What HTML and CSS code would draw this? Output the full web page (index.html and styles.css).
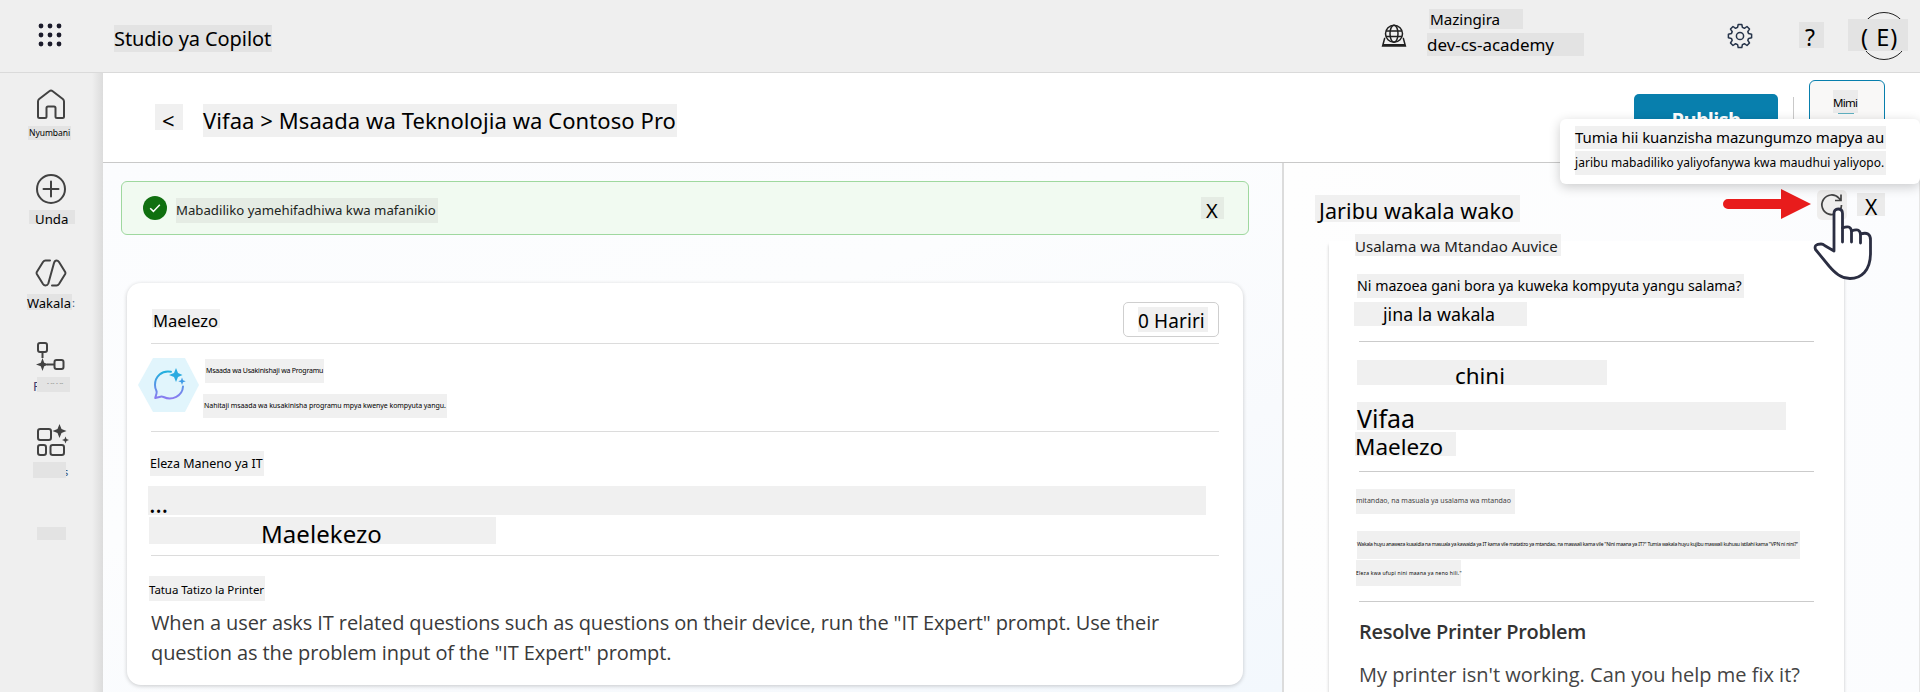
FILE: index.html
```html
<!DOCTYPE html>
<html lang="sw">
<head>
<meta charset="utf-8">
<title>Studio ya Copilot</title>
<link rel="stylesheet" href="styles.css">
</head>
<body>
<header class="topbar">
  <svg class="waffle" width="26" height="26" viewBox="0 0 26 26" fill="#1b1b2b"><circle cx="4" cy="4" r="2.4"/><circle cx="13" cy="4" r="2.4"/><circle cx="22" cy="4" r="2.4"/><circle cx="4" cy="13" r="2.4"/><circle cx="13" cy="13" r="2.4"/><circle cx="22" cy="13" r="2.4"/><circle cx="4" cy="22" r="2.4"/><circle cx="13" cy="22" r="2.4"/><circle cx="22" cy="22" r="2.4"/></svg>
  <div class="hl dark brand"><span>Studio ya Copilot</span></div>
  <svg class="globe" width="26" height="24" viewBox="0 0 26 24" fill="none" stroke="#1f1f1f" stroke-width="1.5"><circle cx="13" cy="9.7" r="8.5"/><ellipse cx="13" cy="9.7" rx="4" ry="8.5"/><path d="M5 7h16M5 12.5h16M4.3 14.5H3.6L1.6 22h22.8l-2-7.5h-.7M2 20.8h22"/></svg>
  <div class="env">
    <div class="hl dark env-label"><span>Mazingira</span></div>
    <div class="hl dark env-name"><span>dev-cs-academy</span></div>
  </div>
  <svg class="gear" width="26" height="26" viewBox="0 0 26 26" fill="none" stroke="#26344a" stroke-width="1.5" stroke-linejoin="round"><circle cx="13" cy="13" r="3.6"/><path d="M11.2 1.4h3.6l.6 3 2 .9 2.6-1.8 2.5 2.5-1.7 2.6.8 2 3 .6v3.6l-3 .6-.8 2 1.7 2.6-2.5 2.5-2.6-1.8-2 .9-.6 3h-3.6l-.6-3-2-.9L6 22.500 3.500 20l1.700-2.600-.8-2-3-.6v-3.600l3-.6.8-2L3.500 6 6 3.500l2.600 1.800 2-.9z"/></svg>
  <div class="hl dark help"><span>?</span></div>
  <div class="avatar"><div class="hl dark initials"><span>( E)</span></div></div>
</header>
<div class="body">
  <nav class="rail">
    <svg class="i-home" width="30" height="31" viewBox="0 0 30 31" fill="none" stroke="#424242" stroke-width="2" stroke-linejoin="round"><path d="M2 12.500Q2 11 3.200 10L13.300 2.200Q15 1 16.700 2.200L26.800 10Q28 11 28 12.500V27.500Q28 29 26.500 29H21Q19.500 29 19.500 27.500V19Q19.500 17.500 18 17.500H12Q10.500 17.500 10.500 19V27.500Q10.500 29 9 29H3.500Q2 29 2 27.500Z"/></svg>
    <div class="hl dark n-home"><span>Nyumbani</span></div>
    <svg class="i-add" width="32" height="32" viewBox="0 0 32 32" fill="none" stroke="#424242" stroke-width="2"><circle cx="16" cy="16" r="14"/><path d="M16 8.500v15M8.500 16h15" stroke-linecap="round"/></svg>
    <div class="hl dark n-add"><span>Unda</span></div>
    <svg class="i-agent" width="32" height="30" viewBox="0 0 32 30" fill="none" stroke="#424242" stroke-width="2" stroke-linecap="round" stroke-linejoin="round"><path d="M15 2.500H10.500Q9 2.500 8 4L1.800 14Q1.300 15 1.800 16L8 26Q9 27.500 10.500 27.500Q12.500 27.500 13.300 25.500L19 5Q19.800 2.500 21.500 2.500Q23 2.500 24 4L30.200 14Q30.700 15 30.200 16L24 26Q23 27.500 21.500 27.500H17"/></svg>
    <div class="nav-row n-agent-row"><div class="hl dark n-agent"><span>Wakala</span></div><span class="rest">:</span></div>
    <svg class="i-flow" width="30" height="30" viewBox="0 0 30 30" fill="none" stroke="#424242" stroke-width="2"><rect x="2" y="2" width="9" height="9" rx="2"/><rect x="18.500" y="19" width="9" height="9" rx="2"/><path d="M6.500 11v6M11 23.500h7.500"/><path stroke="none" fill="#424242" d="M6.500 17l1.700 4.800 4.800 1.700-4.800 1.700L6.500 30l-1.700-4.800L0 23.500l4.800-1.700z"/></svg>
    <div class="nav-row n-flow-row"><span class="cut">F</span><div class="hl dark n-flow"><span>- -- - --</span></div></div>
    <svg class="i-tools" width="34" height="34" viewBox="0 0 34 34" fill="none" stroke="#424242" stroke-width="2"><rect x="2" y="6" width="13" height="11" rx="2.200"/><rect x="2" y="22" width="8" height="10" rx="2.200"/><rect x="14.500" y="22" width="13.500" height="10" rx="2.200"/><g stroke="none" fill="#424242"><path d="M23.500 1l2 5 5 2-5 2-2 5-2-5-5-2 5-2zM29.500 13.500l1 2.500 2.500 1-2.500 1-1 2.500-1-2.500-2.500-1 2.500-1z"/></g></svg>
    <div class="nav-row n-tools-row"><div class="hl dark n-tools"></div><span class="rest">s</span></div>
    <div class="hl dark n-more"></div>
  </nav>
  <main class="main">
    <div class="crumbs">
      <div class="hl back"><span>&lt;</span></div>
      <div class="hl trail"><span>Vifaa &gt; Msaada wa Teknolojia wa Contoso Pro</span></div>
      <button class="publish">Publish</button>
      <div class="sep"></div>
      <div class="more"><div class="hl mimi"><span>Mimi</span></div><i></i></div>
    </div>
    <div class="columns">
      <section class="left">
        <div class="notice">
          <svg width="24" height="24" viewBox="0 0 24 24"><circle cx="12" cy="12" r="12" fill="#107010"/><path d="M7.200 12.200l3.200 3.200L16.800 8.800" fill="none" stroke="#fff" stroke-width="1.500"/></svg>
          <div class="hl green saved"><span>Mabadiliko yamehifadhiwa kwa mafanikio</span></div>
          <div class="hl green dismiss"><span>X</span></div>
        </div>
        <article class="card">
          <div class="card-head">
            <div class="hl heading"><span>Maelezo</span></div>
            <div class="edit"><div class="hl edit-label"><span>0 Hariri</span></div></div>
          </div>
          <div class="topic">
            <svg width="62" height="54" viewBox="0 0 62 54"><defs><linearGradient id="chat" x1="0" y1="0" x2="0" y2="1"><stop offset="0" stop-color="#22b0dd"/><stop offset="1" stop-color="#8b7cf0"/></linearGradient></defs><path fill="#e1f5fc" d="M15 0h32l14 27-14 27H15L0 27z"/><path d="M33 13.800C24 12 17 18.500 17 27Q17 30 18.300 32.500Q19 34 18.500 35.500L17.200 40L22.500 38.700Q24 38.300 25.500 39C34 43 44.500 38 45 28.500" fill="none" stroke="url(#chat)" stroke-width="2" stroke-linecap="round" stroke-linejoin="round"/><path fill="#2aabe0" d="M38 10l2 5 4.500 2-4.500 2-2 5-2-5-5-2 5-2z"/><path fill="#3d9be6" d="M44 19.500l1 2.700 2.700 1-2.700 1-1 2.800-1-2.800-2.700-1 2.700-1z"/></svg>
            <div>
              <div class="hl tiny t-one"><span>Msaada wa Usakinishaji wa Programu</span></div>
              <div class="hl tiny t-two"><span>Nahitaji msaada wa kusakinisha programu mpya kwenye kompyuta yangu.</span></div>
            </div>
          </div>
          <div class="expert">
            <div class="hl e-title"><span>Eleza Maneno ya IT</span></div>
            <div class="hl e-dots"><span>...</span></div>
            <div class="hl e-guide"><span>Maelekezo</span></div>
          </div>
          <div class="hl p-title"><span>Tatua Tatizo la Printer</span></div>
          <p class="para">When a user asks IT related questions such as questions on their device, run the "IT Expert" prompt. Use their<br>question as the problem input of the "IT Expert" prompt.</p>
        </article>
      </section>
      <aside class="test">
        <div class="test-head">
          <div class="hl t-title"><span>Jaribu wakala wako</span></div>
          <svg class="arrow" width="88" height="30" viewBox="0 0 88 30" fill="#e81c1c"><path d="M5 10H58V0L88 15 58 30V20H5A5 5 0 0 1 5 10z"/></svg>
          <div class="refresh"><svg width="30" height="30" viewBox="0 0 30 30" fill="none" stroke="#424242" stroke-width="1.700"><path d="M24.500 15A9.800 9.800 0 1 1 22 8.200L24 10.500M24 4.500v6h-6"/></svg></div>
          <div class="hl dark2 t-close"><span>X</span></div>
        </div>
        <div class="chat">
          <div class="hl c1"><span>Usalama wa Mtandao Auvice</span></div>
          <div class="hl c2"><span>Ni mazoea gani bora ya kuweka kompyuta yangu salama?</span></div>
          <div class="hl c3"><span>jina la wakala</span></div>
          <hr class="r1">
          <div class="hl c4"><span>chini</span></div>
          <div class="hl c5"><span>Vifaa</span></div>
          <div class="hl c6"><span>Maelezo</span></div>
          <hr class="r2">
          <div class="hl tiny c7"><span>mitandao, na masuala ya usalama wa mtandao</span></div>
          <div class="hl c8"><span>Wakala huyu anaweza kusaidia na masuala ya kawaida ya IT kama vile matatizo ya mtandao, na maswali kama vile "Nini maana ya IT?" Tumia wakala huyu kujibu maswali kuhusu istilahi kama "VPN ni nini?"</span></div>
          <div class="hl c9"><span>Eleza kwa ufupi nini maana ya neno hili."</span></div>
          <hr class="r3">
          <h3 class="c10">Resolve Printer Problem</h3>
          <p class="c11">My printer isn't working. Can you help me fix it?</p>
        </div>
      </aside>
    </div>
  </main>
</div>
<div class="tooltip">
  <div class="hl tip1"><span>Tumia hii kuanzisha mazungumzo mapya au</span></div>
  <div class="hl tip2"><span>jaribu mabadiliko yaliyofanywa kwa maudhui yaliyopo.</span></div>
</div>
<svg class="hand" width="60" height="74" viewBox="0 0 60 74" fill="#fff" stroke="#2b2e42" stroke-width="2.8" stroke-linejoin="round" stroke-linecap="round"><path d="M21 44V6.500Q21 2 25.200 2T29.500 6.500V21Q37.500 17.500 38.500 24Q46.500 20.500 47.500 27Q57.500 24 57.500 33V46C57.500 64 48 71.500 37 71.500C28 71.500 22 66 16 59L2.500 42.500Q.5 37 8 37Q10 37 12 38.800L21 44Z"/><path fill="none" d="M29.500 21v14M38.500 24v11M47.500 27v9"/></svg>
</body>
</html>
```
FILE: styles.css
```css
* { box-sizing: border-box; }
body { margin: 0; width: 1920px; height: 692px; overflow: hidden; background: #efefef; color: #000; font-family: "Noto Sans", "Open Sans", sans-serif; }
svg { display: block; flex: none; }
p, h3 { margin: 0; }
hr { margin: 0; border: 0; height: 1px; background: #cbcbcb; }
.hl { flex: none; background: #f0f0f0; white-space: pre; }
.hl span { display: block; width: max-content; }
.dark { background: #e3e3e3; }
.dark2 { background: #ebebeb; }
.green { background: #e5ece4; }

/* Top bar */
.topbar { height: 73px; display: flex; align-items: flex-start; background: #efefef; border-bottom: 1px solid #dadada; }
.waffle { margin: 22px 0 0 37px; }
.brand { margin: 25px 0 0 51px; width: 158px; height: 27px; font-size: 20px; line-height: 28.5px; letter-spacing: -.09px; }
.globe { margin: 24px 0 0 1109px; }
.env { margin: 9px 0 0 20px; width: 157px; }
.env-label { margin-left: 2px; width: 94px; height: 20px; padding-left: 1px; font-size: 15.2px; line-height: 21.5px; letter-spacing: -.05px; }
.env-name { margin-top: 4px; width: 157px; height: 23px; font-size: 17px; line-height: 23px; letter-spacing: -.03px; }
.gear { margin: 23px 0 0 143px; }
.help { margin: 22px 0 0 46px; width: 25px; height: 26px; padding-left: 6px; font-size: 23px; line-height: 31px; }
.avatar { margin: 12px 0 0 36px; width: 48px; height: 48px; border: 1px solid #222; border-radius: 50%; }
.initials { margin: 6px 0 0 -13px; width: 60px; height: 32px; padding-left: 13px; font-size: 23.5px; line-height: 36px; letter-spacing: 1px; }

/* Navigation rail */
.body { display: flex; height: 619px; }
.rail { width: 103px; flex: none; display: flex; flex-direction: column; align-items: flex-start; background: linear-gradient(90deg, #efefef 92px, #dcdcdc 103px); }
.i-home { margin: 16px 0 0 36px; }
.n-home { margin: 6px 0 0 28px; width: 43px; height: 14px; padding-left: 1px; font-size: 8.5px; line-height: 13.4px; letter-spacing: -.05px; }
.i-add { margin: 33px 0 0 35px; }
.n-add { margin: 5px 0 0 29px; width: 46px; height: 14px; padding-left: 6px; font-size: 13.2px; line-height: 18.5px; }
.i-agent { margin: 34px 0 0 35px; }
.nav-row { display: flex; }
.n-agent-row { margin: 6px 0 0 27px; }
.n-agent { width: 45px; height: 16px; font-size: 13px; line-height: 18px; }
.rest { font-size: 11px; line-height: 18px; color: #3b5a80; height: 16px; }
.i-flow { margin: 31px 0 0 36px; }
.n-flow-row { margin: 6px 0 0 33px; }
.cut { width: 4px; height: 16px; font-size: 13px; line-height: 19px; color: #40406e; }
.n-flow { width: 33px; height: 15px; padding-left: 10px; font-size: 6px; line-height: 12px; color: #666; position: relative; }
.i-tools { margin: 30px 0 0 36px; }
.n-tools-row { margin: 5px 0 0 33px; }
.n-tools { width: 33px; height: 16px; position: relative; }
.n-tools-row .rest { margin-left: -3px; line-height: 20px; }
.n-more { margin: 49px 0 0 37px; width: 29px; height: 13px; }

/* Page header */
.main { width: 1817px; background: #fff; }
.crumbs { height: 90px; display: flex; align-items: flex-start; border-bottom: 1px solid #c9c9c9; background: #fff; }
.back { margin: 31px 0 0 52px; width: 28px; height: 26px; padding-left: 7px; font-size: 22px; line-height: 32px; }
.trail { margin: 31px 0 0 20px; width: 474px; height: 33px; font-size: 22px; line-height: 32px; letter-spacing: .077px; }
.publish { margin: 21px 0 0 957px; width: 144px; height: 46px; padding: 0; border: 0; border-radius: 5px; background: #087fad; color: #fff; font: 700 20px/46px "Open Sans", "Noto Sans", sans-serif; letter-spacing: -.7px; padding-top: 3px; }
.sep { margin: 24px 0 0 15px; width: 1px; height: 40px; background: #c9c9c9; }
.more { margin: 7px 0 0 15px; width: 76px; height: 60px; padding: 9px 0 0 23px; border: 1.5px solid #087fad; border-radius: 6px; background: #f9f8f7; }
.mimi { width: 25px; height: 23px; background: #ebebeb; font-size: 11.5px; line-height: 25px; letter-spacing: -.7px; }
.more i { display: block; margin-left: 5px; width: 16px; height: 1px; background: #5fb0c0; }

/* Agent details */
.columns { display: flex; height: 529px; }
.left { width: 1179px; padding: 18px 0 0 18px; background: linear-gradient(160deg, #fbfcfe 0%, #fcfdfe 40%, #f8fafd 70%, #f3f8fd 100%); }
.notice { width: 1128px; height: 54px; display: flex; align-items: flex-start; border: 1px solid #9fd89f; border-radius: 6px; background: #f1faf1; }
.notice svg { margin: 14px 0 0 21px; }
.saved { margin: 16px 0 0 9px; width: 262px; height: 25px; font-size: 13.2px; line-height: 25px; color: #1c241c; }
.dismiss { margin: 15px 0 0 763px; width: 23px; height: 22px; padding-left: 5px; font-size: 20px; line-height: 27.500px; }
.card { margin: 48px 0 0 6px; width: 1116px; height: 402px; padding: 0 24px; border-radius: 14px; background: #fff; box-shadow: 0 1px 4px rgba(0, 0, 0, .2); }
.card-head { height: 61px; display: flex; align-items: flex-start; border-bottom: 1px solid #dcdcdc; }
.heading { margin: 26px 0 0 1px; width: 68px; height: 19px; padding-left: 1px; font-size: 16.6px; line-height: 23.5px; }
.edit { margin: 19px 0 0 903px; width: 96px; height: 35px; padding: 4px 0 0 14px; border: 1px solid #cfcfcf; border-radius: 5px; }
.edit-label { width: 70px; height: 25px; font-size: 19px; line-height: 29.3px; letter-spacing: .1px; }
.topic { height: 88px; display: flex; padding-top: 14px; border-bottom: 1px solid #dcdcdc; }
.topic > svg { margin-left: -13px; }
.tiny { font-size: 7px; line-height: 23.5px; }
.t-one { margin: 1px 0 0 5px; width: 119px; height: 24px; padding-left: 1px; letter-spacing: -.21px; }
.t-two { margin: 11px 0 0 3px; width: 244px; height: 24px; padding-left: 1px; letter-spacing: -.06px; }
.expert { height: 124px; padding-top: 19px; border-bottom: 1px solid #dcdcdc; }
.e-title { margin-left: -1px; width: 114px; height: 25px; font-size: 12.5px; line-height: 25.5px; }
.e-dots { margin: 10px 0 0 -3px; width: 1058px; height: 29px; padding-left: 1px; font-size: 25px; line-height: 35.4px; letter-spacing: -.4px; }
.e-guide { margin: 2px 0 0 -2px; width: 347px; height: 27px; padding-left: 112px; font-size: 24px; line-height: 33.4px; letter-spacing: .06px; }
.p-title { margin: 20px 0 0 -2px; width: 116px; height: 25px; font-size: 11.5px; line-height: 28.5px; letter-spacing: -.07px; }
.para { margin-top: 7px; font: 20px/30px "Open Sans", "Noto Sans", sans-serif; letter-spacing: -.1px; color: #3a3a3a; white-space: nowrap; }

/* Test pane */
.test { width: 638px; border-left: 2px solid #dcdcdc; border-right: 1px solid #e6e6e6; background: linear-gradient(90deg, #fefefe, #fbfcfe); }
.test-head { height: 78px; display: flex; align-items: flex-start; }
.t-title { margin: 32px 0 0 31px; width: 205px; height: 27px; padding-left: 4px; font-size: 21.5px; line-height: 31px; letter-spacing: .08px; }
.arrow { margin: 26px 0 0 203px; }
.refresh { margin: 27px 0 0 6px; width: 30px; height: 30px; border-radius: 5px; background: #efeeed; }
.t-close { margin: 30px 0 0 10px; width: 28px; height: 23px; padding-left: 8px; font-size: 21px; line-height: 29px; }
.chat { display: flow-root; margin-left: 45px; width: 515px; height: 470px; padding-left: 25px; background: #fff; box-shadow: 0 4px 3px rgba(0, 0, 0, .22); }
.chat .hl { margin-left: 3px; }
.chat .c1 { margin: -7px 0 0 1px; width: 206px; height: 22px; font-size: 15px; line-height: 25px; color: #1c1c1c; }
.c2 { margin-top: 18px; width: 387px; height: 24px; font-size: 14.2px; line-height: 24px; }
.chat .c3 { margin: 4px 0 0 0; width: 173px; height: 24px; padding-left: 29px; font-size: 17.8px; line-height: 24.8px; }
.chat hr { margin-left: 5px; width: 455px; }
.r1 { margin-top: 15px; }
.c4 { margin-top: 18px; width: 250px; height: 25px; padding-left: 98px; font-size: 22.4px; line-height: 31px; }
.c5 { margin-top: 17px; width: 429px; height: 28px; font-size: 25px; line-height: 33.4px; }
.chat .c6 { margin: 2px 0 0 1px; width: 101px; height: 24px; font-size: 22.5px; line-height: 29px; }
.chat .r2 { margin-top: 15px; }
.chat .c7 { margin: 17px 0 0 2px; width: 159px; height: 25px; color: #444; }
.c8 { margin-top: 17px; width: 443px; height: 28px; font-size: 5px; line-height: 26.5px; letter-spacing: -.2px; }
.chat .c9 { margin: 1px 0 0 2px; width: 105px; height: 26px; font-size: 5px; line-height: 26px; letter-spacing: .25px; }
.chat .r3 { margin-top: 15px; }
.c10, .c11 { padding-left: 5px; color: #333; white-space: nowrap; }
.c10 { margin-top: 15px; font: 600 20px/29px "Open Sans", "Noto Sans", sans-serif; letter-spacing: -.28px; }
.c11 { margin-top: 14px; font: 400 20px/29px "Open Sans", "Noto Sans", sans-serif; color: #444; }

/* Tooltip and pointer over the page */
.tooltip { position: absolute; left: 1560px; top: 119px; width: 360px; height: 65px; padding: 7px 0 0 15px; border-radius: 6px; background: #fff; box-shadow: 0 3px 12px rgba(0, 0, 0, .2); }
.tip1 { width: 311px; height: 23px; font-size: 15px; line-height: 23px; letter-spacing: -.08px; }
.tip2 { margin-top: 2px; width: 311px; height: 24px; font-size: 12px; line-height: 24.500px; letter-spacing: .04px; }
.hand { position: absolute; left: 1813px; top: 207px; }
```
